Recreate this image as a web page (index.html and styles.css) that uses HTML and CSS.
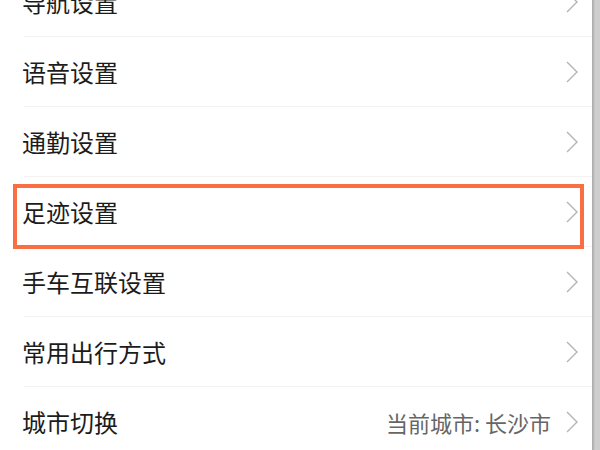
FILE: index.html
```html
<!DOCTYPE html>
<html lang="zh-CN">
<head>
<meta charset="utf-8">
<link rel="stylesheet" href="styles.css">
</head>
<body>
<div class="screen">
  <ul class="list">
    <li class="row"><span class="label">导航设置</span><span class="chev"><svg width="12" height="22" viewBox="0 0 12 22"><path d="M1 1 L11 11 L1 21" fill="none" stroke="#b3b3b3" stroke-width="1.4"/></svg></span></li>
    <li class="row"><span class="label">语音设置</span><span class="chev"><svg width="12" height="22" viewBox="0 0 12 22"><path d="M1 1 L11 11 L1 21" fill="none" stroke="#b3b3b3" stroke-width="1.4"/></svg></span></li>
    <li class="row"><span class="label">通勤设置</span><span class="chev"><svg width="12" height="22" viewBox="0 0 12 22"><path d="M1 1 L11 11 L1 21" fill="none" stroke="#b3b3b3" stroke-width="1.4"/></svg></span></li>
    <li class="row highlighted"><span class="label">足迹设置</span><span class="chev"><svg width="12" height="22" viewBox="0 0 12 22"><path d="M1 1 L11 11 L1 21" fill="none" stroke="#b3b3b3" stroke-width="1.4"/></svg></span><span class="mark"></span></li>
    <li class="row"><span class="label">手车互联设置</span><span class="chev"><svg width="12" height="22" viewBox="0 0 12 22"><path d="M1 1 L11 11 L1 21" fill="none" stroke="#b3b3b3" stroke-width="1.4"/></svg></span></li>
    <li class="row"><span class="label">常用出行方式</span><span class="chev"><svg width="12" height="22" viewBox="0 0 12 22"><path d="M1 1 L11 11 L1 21" fill="none" stroke="#b3b3b3" stroke-width="1.4"/></svg></span></li>
    <li class="row"><span class="label">城市切换</span><span class="value">当前城市: 长沙市</span><span class="chev"><svg width="12" height="22" viewBox="0 0 12 22"><path d="M1 1 L11 11 L1 21" fill="none" stroke="#b3b3b3" stroke-width="1.4"/></svg></span></li>
  </ul>
  <div class="scrollbar"></div>
</div>
</body>
</html>
```
FILE: styles.css
```css
html, body {
  margin: 0;
  padding: 0;
  background: #fff;
}
.screen {
  width: 600px;
  height: 450px;
  overflow: hidden;
  display: flex;
  font-family: "Noto Sans CJK SC", "Noto Sans", sans-serif;
}
.list {
  flex: 1;
  list-style: none;
  margin: -33px 0 0 0;
  padding: 0;
}
.row {
  position: relative;
  height: 70px;
  display: flex;
  align-items: center;
  padding: 0 14px 0 22px;
  box-sizing: border-box;
}
.row::after {
  content: "";
  position: absolute;
  left: 24px;
  right: 0;
  bottom: 0;
  height: 1px;
  background: #f2f2f2;
}
.label {
  flex: 1;
  font-size: 24px;
  color: #1c1c1c;
  line-height: 1;
}
.value {
  font-size: 22px;
  color: #666;
  line-height: 1;
  margin-right: 15px;
}
.chev {
  display: flex;
  align-items: center;
  margin-top: -1px;
}
.mark {
  position: absolute;
  left: 13px;
  right: 8px;
  top: 7px;
  bottom: -2px;
  border: 4.5px solid #f96e42;
  z-index: 1;
}
.scrollbar {
  width: 8px;
  height: 450px;
  background: linear-gradient(to right, #a9a9a9 0, #bdbdbd 2px, #cfcfcf 3px, #cdcdcd 8px);
}
```
